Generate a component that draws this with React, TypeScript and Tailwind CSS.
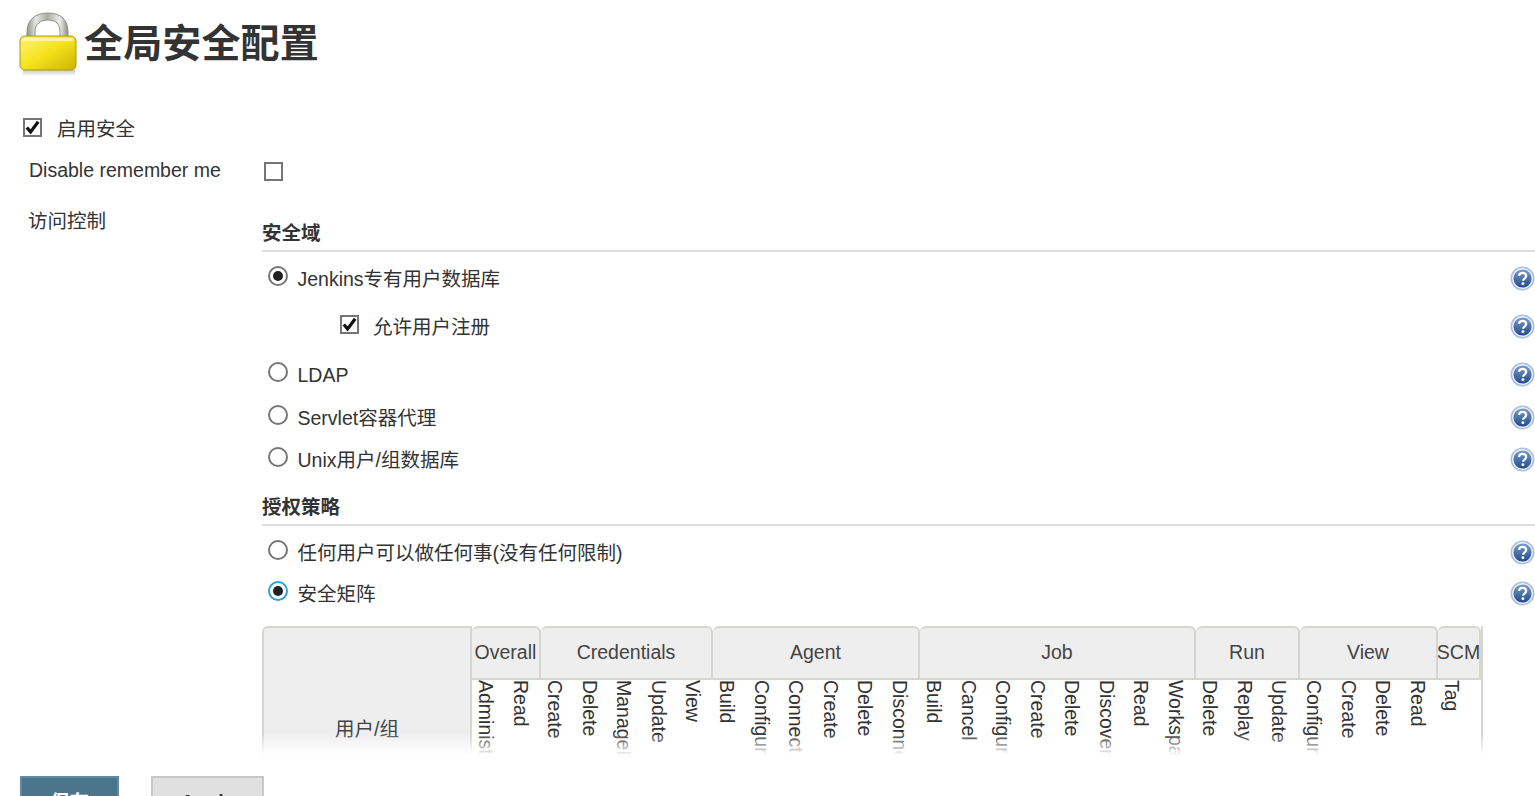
import React from 'react';

const FONT = "font-['Liberation_Sans','Noto_Sans_CJK_SC',sans-serif]";

function LockIcon() {
  return (
    <svg width="62" height="68" viewBox="0 0 62 68" className="shrink-0">
      <defs>
        <linearGradient id="shackle" x1="0" x2="1" y1="0" y2="0">
          <stop offset="0" stopColor="#8f948c" />
          <stop offset="0.22" stopColor="#e4e6e2" />
          <stop offset="0.5" stopColor="#a9ada5" />
          <stop offset="0.8" stopColor="#eceeea" />
          <stop offset="1" stopColor="#8b8f87" />
        </linearGradient>
        <linearGradient id="body" x1="0" x2="1" y1="0" y2="1">
          <stop offset="0" stopColor="#fff27a" />
          <stop offset="0.5" stopColor="#f5e21c" />
          <stop offset="1" stopColor="#c9b400" />
        </linearGradient>
        <linearGradient id="shadow" x1="0" x2="0" y1="0" y2="1">
          <stop offset="0" stopColor="#999" stopOpacity="0.55" />
          <stop offset="1" stopColor="#999" stopOpacity="0" />
        </linearGradient>
      </defs>
      <rect x="4" y="62" width="52" height="6" fill="url(#shadow)" />
      <path d="M8 40V24C8 12 16 5 29 5s20 7 20 19v16h-8V24c0-8-4-12-12-12s-13 4-13 12v16z" fill="url(#shackle)" stroke="#8d918a" strokeWidth="1" />
      <rect x="1" y="28" width="56" height="34" rx="5" fill="url(#body)" stroke="#a99a10" strokeWidth="1" />
      <rect x="3" y="30" width="52" height="3" rx="1.5" fill="#fff9b0" opacity="0.8" />
    </svg>
  );
}

function HelpIcon() {
  return (
    <svg width="25" height="25" viewBox="0 0 24 24" className="shrink-0 mb-[2px]">
      <defs>
        <linearGradient id="help" x1="0" x2="0" y1="0" y2="1">
          <stop offset="0" stopColor="#7c9cc9" />
          <stop offset="1" stopColor="#1f4b8e" />
        </linearGradient>
      </defs>
      <circle cx="12" cy="12" r="11.5" fill="#aebfdb" />
      <circle cx="12" cy="12" r="10" fill="#eef2f8" />
      <circle cx="12" cy="12" r="8.7" fill="url(#help)" />
      <path d="M8.6 9.6c.2-2 1.6-3 3.5-3s3.4 1.1 3.4 2.9c0 2.6-3 2.4-3 4.7" fill="none" stroke="#fff" strokeWidth="2.1" />
      <circle cx="12.4" cy="17" r="1.4" fill="#fff" />
    </svg>
  );
}

function Check({ checked = false }: { checked?: boolean }) {
  return (
    <span className="w-[19px] h-[19px] border-2 border-[#767676] bg-white flex items-center justify-center shrink-0">
      {checked && (
        <svg width="15" height="15" viewBox="0 0 15 15">
          <path d="M1.8 7.5l3.8 4.4L13.2 1.8" fill="none" stroke="#111" strokeWidth="3.2" />
        </svg>
      )}
    </span>
  );
}

function Radio({ checked = false, focus = false }: { checked?: boolean; focus?: boolean }) {
  return (
    <span className={`w-[20px] h-[20px] rounded-full border-2 bg-white flex items-center justify-center shrink-0 ${focus ? 'border-[#2d9fd9]' : 'border-[#767676]'}`}>
      {checked && <span className="w-[10px] h-[10px] rounded-full bg-[#222]" />}
    </span>
  );
}

function OptionRow({ label, checked, focus, rowClass }: { label: string; checked?: boolean; focus?: boolean; rowClass: string }) {
  return (
    <div className={`flex items-center ${rowClass}`}>
      <div className="ml-[6px] mb-[6px]">
        <Radio checked={checked} focus={focus} />
      </div>
      <span className="ml-[9.5px] flex-1 pt-[2px]">{label}</span>
      <HelpIcon />
    </div>
  );
}

function SectionTitle({ label, height }: { label: string; height: string }) {
  return (
    <div className={`${height} flex items-end border-b-2 border-[#e0e0e0] font-bold pb-[2px]`}>{label}</div>
  );
}

const GROUPS = [
  { name: 'Overall', width: 'w-[69px]', perms: ['Administer', 'Read'] },
  { name: 'Credentials', width: 'w-[172px]', perms: ['Create', 'Delete', 'ManageDomains', 'Update', 'View'] },
  { name: 'Agent', width: 'w-[207px]', perms: ['Build', 'Configure', 'Connect', 'Create', 'Delete', 'Disconnect'] },
  { name: 'Job', width: 'w-[276px]', perms: ['Build', 'Cancel', 'Configure', 'Create', 'Delete', 'Discover', 'Read', 'Workspace'] },
  { name: 'Run', width: 'w-[104px]', perms: ['Delete', 'Replay', 'Update'] },
  { name: 'View', width: 'w-[138px]', perms: ['Configure', 'Create', 'Delete', 'Read'] },
  { name: 'SCM', width: 'w-[45px]', perms: ['Tag'] },
];

function Matrix() {
  return (
    <div className="mt-[12px] flex h-[140px] text-[#444] w-[1220px]">
      <div className="w-[210px] shrink-0 bg-[#eeeeee] border-2 border-b-0 border-[#d3d7cf] rounded-tl-[6px] flex items-end justify-center pb-[22px]">
        用户/组
      </div>
      {GROUPS.map((g, gi) => (
        <div key={g.name} className={`${g.width} shrink-0 flex flex-col ${gi === GROUPS.length - 1 ? 'border-r-2 border-[#d3d7cf]' : ''}`}>
          <div className="h-[54px] shrink-0 bg-[#eeeeee] border-2 border-l-0 border-[#d3d7cf] rounded-t-[6px] flex items-center justify-center whitespace-nowrap overflow-hidden">
            {g.name}
          </div>
          <div className="flex flex-1 overflow-hidden">
            {g.perms.map((p) => (
              <div key={g.name + p} className="w-[34.5px] shrink-0 pl-[2px] overflow-hidden">
                <span className="block [writing-mode:vertical-rl] whitespace-nowrap leading-[24px] h-[100px] text-[#333]">{p}</span>
              </div>
            ))}
          </div>
        </div>
      ))}
    </div>
  );
}

export default function App() {
  return (
    <div className={`h-screen overflow-hidden bg-white text-[#333] text-[19.5px] ${FONT}`}>
      <main className="relative h-[755px] overflow-hidden">
        <header className="h-[108px] pl-[19px] pt-[8px] flex items-start">
          <LockIcon />
          <h1 className="text-[39px] font-bold leading-[71px] ml-[3px] tracking-[0.15px]">全局安全配置</h1>
        </header>

        <div className="h-[42px] pl-[23px] flex items-center">
          <div className="mb-[4px]">
            <Check checked />
          </div>
          <span className="ml-[15px] pt-[1px]">启用安全</span>
        </div>

        <div className="h-[40px] flex items-center">
          <span className="w-[264px] pl-[29px] pt-[2px]">Disable remember me</span>
          <div className="mt-[2px]">
            <Check />
          </div>
        </div>

        <div className="flex">
          <div className="w-[262px] shrink-0 pl-[28px] pt-[16px] leading-[30px]">访问控制</div>
          <div className="flex-1 min-w-0">
            <SectionTitle label="安全域" height="h-[62px]" />
            <OptionRow label="Jenkins专有用户数据库" checked rowClass="h-[42px] mt-[6px]" />
            <div className="flex items-center h-[42px] mt-[6px]">
              <div className="ml-[78px] mb-[5px]">
                <Check checked />
              </div>
              <span className="ml-[14px] flex-1 pt-[2px]">允许用户注册</span>
              <HelpIcon />
            </div>
            <OptionRow label="LDAP" rowClass="h-[42px] mt-[6px]" />
            <OptionRow label="Servlet容器代理" rowClass="h-[42px] mt-[1px]" />
            <OptionRow label="Unix用户/组数据库" rowClass="h-[42px]" />
            <SectionTitle label="授权策略" height="h-[45px]" />
            <OptionRow label="任何用户可以做任何事(没有任何限制)" rowClass="h-[40px] mt-[7px]" />
            <OptionRow label="安全矩阵" checked focus rowClass="h-[40px] mt-[1px]" />
            <Matrix />
          </div>
        </div>

        <div className="absolute left-0 right-0 bottom-0 h-[22px] bg-gradient-to-b from-white/0 to-white" />
      </main>

      <footer className="pl-[20px] pt-[21px] flex gap-[32px] font-bold">
        <button className="w-[99px] h-[54px] bg-[#4b758b] border-2 border-[#5f8ba3] text-white">保存</button>
        <button className="w-[113px] h-[54px] bg-[#e0e0e0] border-2 border-[#c8c8c8] text-[#333]">Apply</button>
      </footer>
    </div>
  );
}
